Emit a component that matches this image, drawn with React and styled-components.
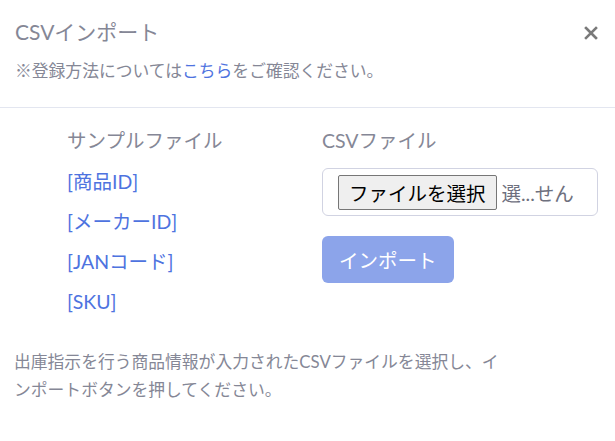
import React from 'react'
import styled, { createGlobalStyle } from 'styled-components'

const GlobalStyle = createGlobalStyle`
  body {
    margin: 0;
    background: #fff;
    font-family: 'Lato', 'Noto Sans CJK JP', sans-serif;
    color: #858796;
  }
`
const Modal = styled.div`
  width: 615px;
  height: 441px;
  background: #fff;
`
const Header = styled.div`
  display: flex;
  justify-content: space-between;
  align-items: flex-start;
  padding: 17px 16px 23px 15px;
  border-bottom: 1px solid #e3e6f0;
`
const Title = styled.h5`
  margin: 0;
  font-size: 21px;
  font-weight: 400;
  line-height: 30px;
  color: #858796;
`
const Note = styled.p`
  margin: 11px 0 0;
  font-size: 16.8px;
  line-height: 26px;
`
const Link = styled.a`
  color: #4e73df;
  text-decoration: none;
  cursor: pointer;
`
const CloseButton = styled.button`
  border: 0;
  background: transparent;
  padding: 0;
  margin-top: 6px;
  width: 16px;
  height: 20px;
  display: flex;
  align-items: center;
  justify-content: center;
  color: #7a7a7a;
  cursor: pointer;
`
const Body = styled.div`
  padding: 18px 17px 0 14px;
`
const Columns = styled.div`
  display: grid;
  grid-template-columns: 1fr 276px;
  padding-left: 53px;
`
const Column = styled.div`
  display: flex;
  flex-direction: column;
  align-items: flex-start;
`
const Label = styled.div`
  font-size: 19.5px;
  line-height: 30px;
  margin-bottom: ${props => props.$gap}px;
`
const SampleLink = styled(Link)`
  font-size: 19.5px;
  line-height: 30px;
  margin-bottom: 10px;
`
const FileBox = styled.div`
  box-sizing: border-box;
  width: 100%;
  height: 48px;
  display: flex;
  align-items: center;
  gap: 5px;
  padding: 0 15px;
  border: 1px solid #d1d3e2;
  border-radius: 6px;
  overflow: hidden;
`
const ChooseButton = styled.span`
  box-sizing: border-box;
  height: 35px;
  padding: 0 10px;
  display: flex;
  align-items: center;
  background: #efefef;
  border: 1px solid #767676;
  border-radius: 2px;
  color: #000;
  font-size: 19.5px;
  white-space: nowrap;
`
const FileName = styled.span`
  color: #6e707e;
  font-size: 19.5px;
  white-space: nowrap;
`
const ImportButton = styled.button`
  margin-top: 20px;
  height: 47px;
  padding: 0 17px;
  border: 0;
  border-radius: 6px;
  background: #8ca4ea;
  color: #fff;
  font-family: inherit;
  font-size: 19.5px;
  cursor: default;
`
const Help = styled.p`
  margin: 21px 0 0;
  width: 494px;
  font-size: 16.8px;
  line-height: 28px;
`

export default function App () {
  const samples = ['[商品ID]', '[メーカーID]', '[JANコード]', '[SKU]']

  return (
    <>
      <GlobalStyle />
      <Modal>
        <Header>
          <div>
            <Title>CSVインポート</Title>
            <Note>※登録方法については<Link>こちら</Link>をご確認ください。</Note>
          </div>
          <CloseButton aria-label="close">
            <svg width="14" height="14" viewBox="0 0 14 14">
              <path d="M2 2L12 12M12 2L2 12" stroke="currentColor" strokeWidth="2.6" strokeLinecap="square" />
            </svg>
          </CloseButton>
        </Header>
        <Body>
          <Columns>
            <Column>
              <Label $gap={11}>サンプルファイル</Label>
              {samples.map(s => <SampleLink key={s}>{s}</SampleLink>)}
            </Column>
            <Column>
              <Label $gap={12}>CSVファイル</Label>
              <FileBox>
                <ChooseButton>ファイルを選択</ChooseButton>
                <FileName>選...せん</FileName>
              </FileBox>
              <ImportButton disabled>インポート</ImportButton>
            </Column>
          </Columns>
          <Help>出庫指示を行う商品情報が入力されたCSVファイルを選択し、インポートボタンを押してください。</Help>
        </Body>
      </Modal>
    </>
  )
}
